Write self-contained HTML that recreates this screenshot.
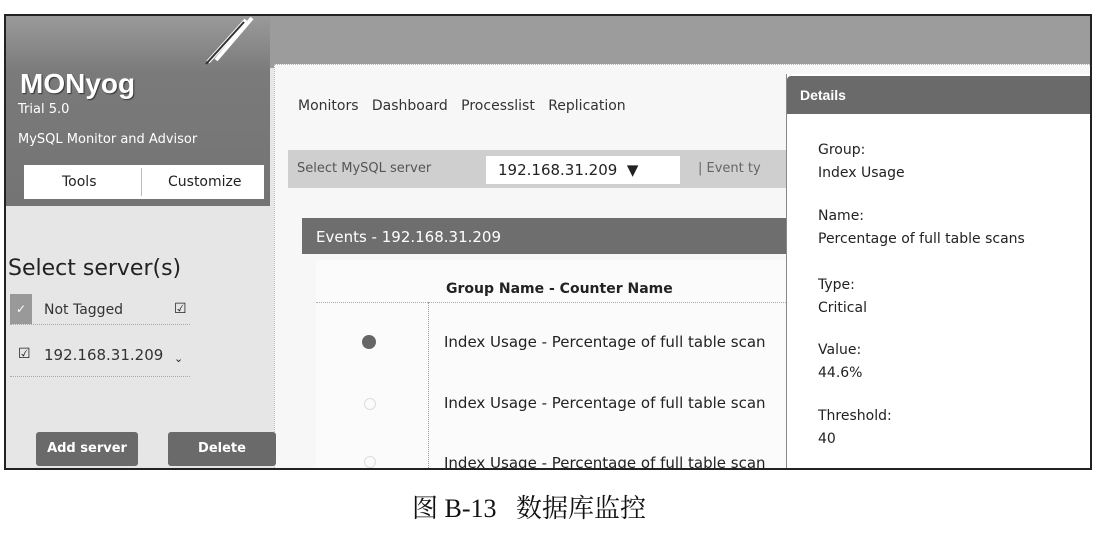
<!DOCTYPE html>
<html><head><meta charset="utf-8"><style>
*{margin:0;padding:0;box-sizing:border-box}
body{width:1100px;height:534px;background:#fff;position:relative;overflow:hidden;font-family:"DejaVu Sans","Liberation Sans",sans-serif;color:#222}
.a{position:absolute;white-space:nowrap}
.frame{left:4px;top:14px;width:1088px;height:456px;border:2px solid #222;background:#e6e6e6;overflow:hidden}
.t{font-size:14px}
.d{font-size:14px;line-height:23px;white-space:pre;color:#222}
</style></head><body>
<div class="a frame">
  <div class="a" style="left:0;top:0;width:1086px;height:52px;background:#9c9c9c"></div>
  <div class="a" style="left:0;top:0;width:264px;height:190px;background:linear-gradient(#9a9a9a,#7a7a7a 30%,#747474)"></div>
  <svg class="a" style="left:190px;top:0" width="60" height="50"><path d="M12 46 L50 4 M20 44 L56 2" stroke="#fff" stroke-width="4"/><path d="M10 48 L48 6" stroke="#333" stroke-width="2"/></svg>
  <div class="a" style="left:14px;top:52px;font:bold 28px 'Liberation Sans',sans-serif;color:#fff;text-shadow:1px 1px 1px #333">MONyog</div>
  <div class="a" style="left:12px;top:86px;font-size:13px;color:#fff">Trial 5.0</div>
  <div class="a" style="left:12px;top:116px;font-size:13px;color:#fff">MySQL Monitor and Advisor</div>
  <div class="a" style="left:18px;top:149px;width:240px;height:34px;background:#fff"></div>
  <div class="a t" style="left:56px;top:158px">Tools</div>
  <div class="a" style="left:135px;top:152px;width:1px;height:28px;background:#bbb"></div>
  <div class="a t" style="left:162px;top:158px">Customize</div>
  <div class="a" style="left:268px;top:48px;width:820px;height:412px;background:#f7f7f7;border:1px dotted #bbb"></div>
  <div class="a t" style="left:292px;top:82px;color:#333">Monitors&nbsp;&nbsp;&nbsp;Dashboard&nbsp;&nbsp;&nbsp;Processlist&nbsp;&nbsp;&nbsp;Replication</div>
  <div class="a" style="left:282px;top:134px;width:500px;height:38px;background:#cfcfcf"></div>
  <div class="a" style="left:291px;top:145px;font-size:13px;color:#555">Select MySQL server</div>
  <div class="a" style="left:480px;top:140px;width:194px;height:28px;background:#fff"></div>
  <div class="a" style="left:492px;top:145px;font-size:15px">192.168.31.209&nbsp;&nbsp;▼</div>
  <div class="a" style="left:692px;top:145px;font-size:13px;color:#666">| Event ty</div>
  <div class="a" style="left:296px;top:202px;width:486px;height:36px;background:#6e6e6e"></div>
  <div class="a" style="left:310px;top:212px;font-size:15px;color:#fff">Events - 192.168.31.209</div>
  <div class="a" style="left:310px;top:244px;width:470px;height:214px;background:#fbfbfb"></div>
  <div class="a" style="left:422px;top:286px;width:1px;height:180px;border-left:1px dotted #999"></div>
  <div class="a" style="left:310px;top:286px;width:470px;height:1px;border-top:1px dotted #aaa"></div>
  <div class="a t" style="left:440px;top:265px;font-weight:bold">Group Name - Counter Name</div>
  <div class="a" style="left:356px;top:319px;width:14px;height:14px;border-radius:50%;background:#666"></div>
  <div class="a" style="left:358px;top:382px;width:12px;height:12px;border-radius:50%;border:1px solid #ddd"></div>
  <div class="a" style="left:358px;top:440px;width:12px;height:12px;border-radius:50%;border:1px solid #ddd"></div>
  <div class="a" style="left:438px;top:317px;font-size:15px">Index Usage - Percentage of full table scan</div>
  <div class="a" style="left:438px;top:378px;font-size:15px">Index Usage - Percentage of full table scan</div>
  <div class="a" style="left:438px;top:438px;font-size:15px">Index Usage - Percentage of full table scan</div>
  <div class="a" style="left:2px;top:240px;font-size:22px">Select server(s)</div>
  <div class="a" style="left:4px;top:278px;width:22px;height:30px;background:#999;color:#fff;font-size:12px;text-align:center;line-height:30px">✓</div>
  <div class="a" style="left:4px;top:308px;width:180px;height:1px;border-top:1px dotted #aaa"></div>
  <div class="a" style="left:4px;top:360px;width:180px;height:1px;border-top:1px dotted #aaa"></div>
  <div class="a t" style="left:38px;top:286px;color:#333">Not Tagged</div>
  <div class="a" style="left:168px;top:285px;font-size:14px">☑</div>
  <div class="a" style="left:12px;top:330px;font-size:14px">☑</div>
  <div class="a" style="left:38px;top:330px;color:#333;font-size:15px">192.168.31.209</div>
  <div class="a" style="left:168px;top:336px;font-size:11px">⌄</div>
  <div class="a" style="left:30px;top:416px;width:102px;height:34px;background:#6a6a6a;border-radius:3px;color:#fff;font-size:13px;font-weight:bold;text-align:center;line-height:34px">Add server</div>
  <div class="a" style="left:162px;top:416px;width:108px;height:34px;background:#6a6a6a;border-radius:3px;color:#fff;font-size:13px;font-weight:bold;text-align:center;line-height:34px">Delete</div>
  <div class="a" style="left:780px;top:58px;width:310px;height:400px;background:#fff;border-left:1px solid #888"></div>
  <div class="a" style="left:781px;top:60px;width:310px;height:38px;background:#6a6a6a;border-radius:4px 0 0 0"></div>
  <div class="a" style="left:794px;top:71px;font:bold 14px 'Liberation Sans',sans-serif;color:#fff">Details</div>
  <div class="a d" style="left:812px;top:123px">Group:
Index Usage</div>
  <div class="a d" style="left:812px;top:189px">Name:
Percentage of full table scans</div>
  <div class="a d" style="left:812px;top:258px">Type:
Critical</div>
  <div class="a d" style="left:812px;top:323px">Value:
44.6%</div>
  <div class="a d" style="left:812px;top:389px">Threshold:
40</div>
</div>
<div class="a" style="left:412px;top:488px;font:26px 'Liberation Serif','Noto Serif CJK SC',serif;color:#111">图 B-13&nbsp;&nbsp;&nbsp;数据库监控</div>
</body></html>
